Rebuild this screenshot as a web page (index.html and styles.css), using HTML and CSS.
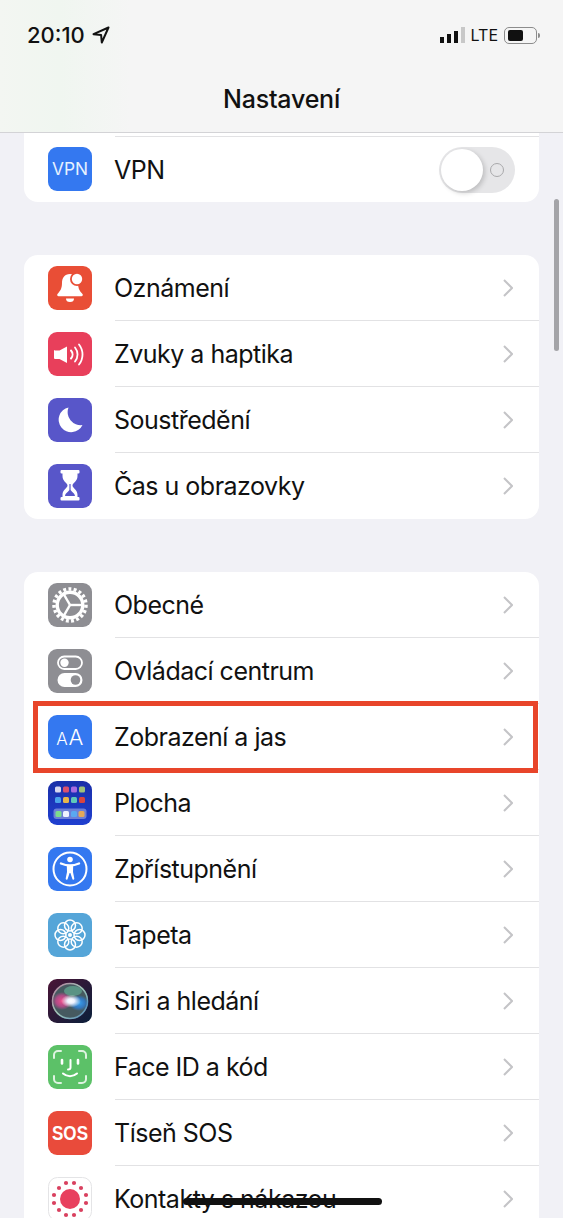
FILE: index.html
```html
<!DOCTYPE html>
<html lang="cs">
<head>
  <meta charset="UTF-8">
  <title>Nastavení</title>
  <link rel="stylesheet" href="styles.css">
</head>
<body>
  <div class="screen">
    <header class="top">
      <div class="status">
        <div class="status-left">
          <span class="time">20:10</span>
          <svg class="loc" viewBox="0 0 18 18"><path d="M16.5 1.500 1.500 8.200l7.600.7.7 7.600z" fill="none" stroke="#111" stroke-width="2" stroke-linejoin="round"/></svg>
        </div>
        <div class="status-right">
          <div class="bars">
            <span class="bar bar-1"></span>
            <span class="bar bar-2"></span>
            <span class="bar bar-3"></span>
            <span class="bar bar-4"></span>
          </div>
          <span class="lte">LTE</span>
          <div class="battery"><span class="battery-fill"></span></div>
          <span class="battery-nub"></span>
        </div>
      </div>
      <h1 class="title">Nastavení</h1>
    </header>

    <main class="list">
      <section class="card card-cut">
        <div class="row">
          <svg class="icon" viewBox="0 0 44 44"><rect width="44" height="44" rx="9" fill="#3478f0"/><text class="icon-text" x="22" y="28" font-size="17.500" fill="#e6f0ff" text-anchor="middle" textLength="36" lengthAdjust="spacingAndGlyphs">VPN</text></svg>
          <div class="row-body row-body-top row-body-last">
            <span class="label">VPN</span>
            <div class="toggle"><span class="knob"></span><span class="toggle-o"></span></div>
          </div>
        </div>
      </section>

      <section class="card">
        <div class="row">
          <svg class="icon" viewBox="0 0 44 44"><rect width="44" height="44" rx="9" fill="#e94e36"/><path d="M22 8c-5.500 0-8 4-8 9 0 6-2 8-4.500 11-.8 1 0 2.200 1 2.200h23c1 0 1.800-1.200 1-2.200C31 25 30 21 30 17c0-5-2.500-9-8-9z" fill="#fff"/><path d="M18 32.500h8a4 3.500 0 0 1-8 0z" fill="#fff"/><circle cx="29" cy="13" r="7" fill="#e94e36"/><circle cx="29" cy="13" r="5.200" fill="#fff"/></svg>
          <div class="row-body"><span class="label">Oznámení</span><svg class="chev" viewBox="0 0 10 18"><path d="M1 1l8 8-8 8"/></svg></div>
        </div>
        <div class="row">
          <svg class="icon" viewBox="0 0 44 44"><rect width="44" height="44" rx="9" fill="#e83f5b"/><path d="M7 18.500h4.500L19 14.500v16.500l-7.500-4H7a1 1 0 0 1-1-1v-7a1 1 0 0 1 1-1z" fill="#fff"/><g fill="none" stroke="#fff" stroke-linecap="round"><path d="M23 18.500a6 6 0 0 1 0 8" stroke-width="2"/><path d="M27 15.500a11 11 0 0 1 0 14" stroke-width="1.800"/><path d="M31 12.500a16 16 0 0 1 0 20" stroke-width="1.800"/></g></svg>
          <div class="row-body"><span class="label">Zvuky a haptika</span><svg class="chev" viewBox="0 0 10 18"><path d="M1 1l8 8-8 8"/></svg></div>
        </div>
        <div class="row">
          <svg class="icon" viewBox="0 0 44 44"><rect width="44" height="44" rx="9" fill="#5856c9"/><path d="M20.500 9.500A12.500 12.500 0 1 0 34.500 27 13 13 0 0 1 20.500 9.500z" fill="#fff"/></svg>
          <div class="row-body"><span class="label">Soustředění</span><svg class="chev" viewBox="0 0 10 18"><path d="M1 1l8 8-8 8"/></svg></div>
        </div>
        <div class="row">
          <svg class="icon" viewBox="0 0 44 44"><rect width="44" height="44" rx="9" fill="#5856c9"/><rect x="12.500" y="6" width="19" height="3.500" rx="1" fill="#fff"/><rect x="12.500" y="33" width="19" height="3.500" rx="1" fill="#fff"/><path d="M14.500 9h15v3c0 5.500-5 7-5 9.500s5 4 5 9.500v2.500h-15V31c0-5.500 5-7 5-9.500s-5-4-5-9.500z" fill="#fff"/><path d="M21.400 20h1.200v5.500c0 2 4 3 4.400 6.500H17c.4-3.500 4.400-4.500 4.400-6.500z" fill="#5856c9"/></svg>
          <div class="row-body row-body-last"><span class="label">Čas u obrazovky</span><svg class="chev" viewBox="0 0 10 18"><path d="M1 1l8 8-8 8"/></svg></div>
        </div>
      </section>

      <section class="card">
        <div class="row">
          <svg class="icon" viewBox="0 0 44 44"><rect width="44" height="44" rx="9" fill="#8e8e93"/><circle cx="22" cy="22" r="16" fill="none" stroke="#fff" stroke-width="3.500" stroke-dasharray="2.900 2.340"/><circle cx="22" cy="22" r="12.800" fill="none" stroke="#fff" stroke-width="3.400"/><g stroke="#fff" stroke-width="2.400"><path d="M22 22H34"/><path d="M22 22l-6 -10.400"/><path d="M22 22l-6 10.400"/></g></svg>
          <div class="row-body"><span class="label">Obecné</span><svg class="chev" viewBox="0 0 10 18"><path d="M1 1l8 8-8 8"/></svg></div>
        </div>
        <div class="row">
          <svg class="icon" viewBox="0 0 44 44"><rect width="44" height="44" rx="9" fill="#8e8e93"/><rect x="10" y="7.500" width="24" height="12.500" rx="6.250" fill="none" stroke="#fff" stroke-width="1.800"/><circle cx="16.500" cy="13.750" r="4.200" fill="#fff"/><rect x="9.500" y="24" width="25" height="14" rx="7" fill="#fff"/><circle cx="27.500" cy="31" r="4.800" fill="#8e8e93"/></svg>
          <div class="row-body"><span class="label">Ovládací centrum</span><svg class="chev" viewBox="0 0 10 18"><path d="M1 1l8 8-8 8"/></svg></div>
        </div>
        <div class="row row-marked">
          <svg class="icon" viewBox="0 0 44 44"><rect width="44" height="44" rx="9" fill="#3478f0"/><text class="icon-thin" x="14" y="30" font-size="17" fill="#fff" text-anchor="middle">A</text><text class="icon-thin" x="28" y="30" font-size="22" fill="#fff" text-anchor="middle">A</text></svg>
          <div class="row-body"><span class="label">Zobrazení a jas</span><svg class="chev" viewBox="0 0 10 18"><path d="M1 1l8 8-8 8"/></svg></div>
          <div class="mark"></div>
        </div>
        <div class="row">
          <svg class="icon" viewBox="0 0 44 44"><defs><linearGradient id="homeBg" x1="0" y1="0" x2="0" y2="1"><stop offset="0" stop-color="#1a2fa8"/><stop offset="1" stop-color="#1f3fd0"/></linearGradient></defs><rect width="44" height="44" rx="9" fill="url(#homeBg)"/><rect x="7" y="5.500" width="6" height="6" rx="1.500" fill="#d8d8ee"/><rect x="15" y="5.500" width="6" height="6" rx="1.500" fill="#d9526f"/><rect x="23" y="5.500" width="6" height="6" rx="1.500" fill="#a86be0"/><rect x="31" y="5.500" width="6" height="6" rx="1.500" fill="#9fc27a"/><rect x="7" y="16" width="6" height="6" rx="1.500" fill="#4aa3ea"/><rect x="15" y="16" width="6" height="6" rx="1.500" fill="#e8b64c"/><rect x="23" y="16" width="6" height="6" rx="1.500" fill="#5fc9b8"/><rect x="31" y="16" width="6" height="6" rx="1.500" fill="#d9453f"/><rect x="5.500" y="27.500" width="33" height="10.500" rx="3" fill="#6c7fd6"/><rect x="7.500" y="30" width="6" height="6" rx="1.500" fill="#7ddc8c"/><rect x="15" y="30" width="6" height="6" rx="1.500" fill="#eef2ff"/><rect x="23" y="30" width="6" height="6" rx="1.500" fill="#5aa8f0"/><rect x="30.500" y="30" width="6" height="6" rx="1.500" fill="#e3a95a"/></svg>
          <div class="row-body"><span class="label">Plocha</span><svg class="chev" viewBox="0 0 10 18"><path d="M1 1l8 8-8 8"/></svg></div>
        </div>
        <div class="row">
          <svg class="icon" viewBox="0 0 44 44"><rect width="44" height="44" rx="9" fill="#3478f0"/><circle cx="22" cy="22" r="16.500" fill="none" stroke="#fff" stroke-width="2"/><circle cx="22" cy="12.500" r="2.800" fill="#fff"/><path d="M13 16.500c3 1.300 6 2 9 2s6-.7 9-2" fill="none" stroke="#fff" stroke-width="2.400" stroke-linecap="round"/><path d="M18.800 18h6.400l-.2 7 1.300 6.500a1 1 0 0 1-2 .3L22.400 26h-.8l-1.900 5.800a1 1 0 0 1-2-.3L19 25z" fill="#fff"/></svg>
          <div class="row-body"><span class="label">Zpřístupnění</span><svg class="chev" viewBox="0 0 10 18"><path d="M1 1l8 8-8 8"/></svg></div>
        </div>
        <div class="row">
          <svg class="icon" viewBox="0 0 44 44"><rect width="44" height="44" rx="9" fill="#55a5d8"/><g fill="none" stroke="#fff" stroke-width="1.500"><circle cx="22" cy="12.500" r="5.500"/><circle cx="22" cy="31.500" r="5.500"/><circle cx="12.500" cy="22" r="5.500"/><circle cx="31.500" cy="22" r="5.500"/><circle cx="15.300" cy="15.300" r="5.500"/><circle cx="28.700" cy="15.300" r="5.500"/><circle cx="15.300" cy="28.700" r="5.500"/><circle cx="28.700" cy="28.700" r="5.500"/></g><circle cx="22" cy="22" r="2" fill="#fff"/></svg>
          <div class="row-body"><span class="label">Tapeta</span><svg class="chev" viewBox="0 0 10 18"><path d="M1 1l8 8-8 8"/></svg></div>
        </div>
        <div class="row">
          <svg class="icon" viewBox="0 0 44 44">
            <defs>
              <linearGradient id="siriBg" x1="0" y1="0" x2="1" y2="1"><stop offset="0" stop-color="#4a1436"/><stop offset="1" stop-color="#0a1f3a"/></linearGradient>
              <linearGradient id="siriRing" x1="0" y1="0" x2="1" y2="1"><stop offset="0" stop-color="#b77a9a"/><stop offset="0.5" stop-color="#9fc5b8"/><stop offset="1" stop-color="#4f86b8"/></linearGradient>
              <radialGradient id="siriGlow"><stop offset="0" stop-color="#fff"/><stop offset="0.35" stop-color="#eef2ff"/><stop offset="1" stop-color="#fff" stop-opacity="0"/></radialGradient>
              <radialGradient id="siriPink"><stop offset="0" stop-color="#ef4f8d"/><stop offset="0.6" stop-color="#c9478f" stop-opacity="0.8"/><stop offset="1" stop-color="#c9478f" stop-opacity="0"/></radialGradient>
              <radialGradient id="siriBlue"><stop offset="0" stop-color="#3aa3f2"/><stop offset="0.6" stop-color="#2f7fd6" stop-opacity="0.8"/><stop offset="1" stop-color="#2f7fd6" stop-opacity="0"/></radialGradient>
            </defs>
            <rect width="44" height="44" rx="9" fill="url(#siriBg)"/>
            <circle cx="22" cy="22" r="18" fill="#465a60"/>
            <circle cx="22" cy="22" r="17.500" fill="none" stroke="url(#siriRing)" stroke-width="1.500"/>
            <ellipse cx="14" cy="22" rx="10" ry="9" fill="url(#siriPink)"/>
            <ellipse cx="31" cy="24" rx="10" ry="8" fill="url(#siriBlue)"/>
            <ellipse cx="25" cy="12" rx="9" ry="5" fill="#6cc2a2" opacity="0.55"/>
            <ellipse cx="23" cy="22" rx="10" ry="6.500" fill="url(#siriGlow)"/>
          </svg>
          <div class="row-body"><span class="label">Siri a hledání</span><svg class="chev" viewBox="0 0 10 18"><path d="M1 1l8 8-8 8"/></svg></div>
        </div>
        <div class="row">
          <svg class="icon" viewBox="0 0 44 44"><rect width="44" height="44" rx="9" fill="#5cc168"/><g fill="none" stroke="#fff" stroke-width="2" stroke-linecap="round"><path d="M6 13V10a4 4 0 0 1 4-4h3M31 6h3a4 4 0 0 1 4 4v3M38 31v3a4 4 0 0 1-4 4h-3M13 38h-3a4 4 0 0 1-4-4v-3" opacity="0.8"/><path d="M14 15v3.500M30 15v3.500" stroke-width="2.600"/><path d="M22.500 15v7.500c0 1.500-1 2-2.500 2"/><path d="M15 28.500c4 3.500 10 3.500 14 0"/></g></svg>
          <div class="row-body"><span class="label">Face ID a kód</span><svg class="chev" viewBox="0 0 10 18"><path d="M1 1l8 8-8 8"/></svg></div>
        </div>
        <div class="row">
          <svg class="icon" viewBox="0 0 44 44"><rect width="44" height="44" rx="9" fill="#e94b3b"/><text class="icon-sos" x="22" y="29" font-size="20.500" fill="#fff" text-anchor="middle" textLength="36" lengthAdjust="spacingAndGlyphs">SOS</text></svg>
          <div class="row-body"><span class="label">Tíseň SOS</span><svg class="chev" viewBox="0 0 10 18"><path d="M1 1l8 8-8 8"/></svg></div>
        </div>
        <div class="row">
          <svg class="icon" viewBox="0 0 44 44"><rect x="0.500" y="0.500" width="43" height="43" rx="9" fill="#fff" stroke="#e4e4e6"/><circle cx="22" cy="22" r="10" fill="#e8405e"/><g fill="#d9405f"><circle cx="18" cy="6" r="2.100"/><circle cx="26" cy="6" r="2.100"/><circle cx="33" cy="11" r="2.100"/><circle cx="38" cy="18" r="2.100"/><circle cx="38" cy="26" r="2.100"/><circle cx="33" cy="33" r="2.100"/><circle cx="26" cy="38" r="2.100"/><circle cx="18" cy="38" r="2.100"/><circle cx="11" cy="33" r="2.100"/><circle cx="6" cy="26" r="2.100"/><circle cx="6" cy="18" r="2.100"/><circle cx="11" cy="11" r="2.100"/></g></svg>
          <div class="row-body row-body-last"><span class="label">Kontakty s nákazou</span><svg class="chev" viewBox="0 0 10 18"><path d="M1 1l8 8-8 8"/></svg></div>
        </div>
      </section>
    </main>

    <div class="scrollbar"></div>
    <div class="home"></div>
  </div>
</body>
</html>
```

FILE: styles.css
```css
html, body {
  margin: 0;
  padding: 0;
}

body {
  font-family: Inter, "Liberation Sans", sans-serif;
  color: #111;
}

.screen {
  position: relative;
  width: 563px;
  height: 1218px;
  overflow: hidden;
  background-color: #f1f1f6;
}

/* horni lista */
.top {
  height: 132px;
  background: linear-gradient(90deg, #f3f6f2 0, #f0f6f0 60px, #f5f5f5 130px);
  border-bottom: 1px solid #d3d3d6;
}

.status {
  display: flex;
  justify-content: space-between;
  align-items: center;
  height: 26px;
  padding: 22px 23px 0 27px;
}

.status-left {
  display: flex;
  align-items: center;
  gap: 7px;
}

.time {
  font-size: 22px;
  font-weight: 500;
}

.loc {
  width: 18px;
  height: 18px;
}

.status-right {
  display: flex;
  align-items: center;
}

.bars {
  display: flex;
  align-items: flex-end;
  gap: 3px;
  height: 16px;
}

.bar {
  width: 4px;
  background: #111;
}

.bar-1 { height: 6px; }
.bar-2 { height: 9px; }
.bar-3 { height: 12px; }
.bar-4 { height: 16px; background: #c8c8c8; }

.lte {
  margin-left: 6px;
  font-size: 16px;
  line-height: 20px;
}

.battery {
  box-sizing: border-box;
  width: 33px;
  height: 17px;
  margin-left: 6px;
  padding: 2px 3px;
  border: 1px solid #8c8c8c;
  border-radius: 5px;
}

.battery-fill {
  display: block;
  width: 15px;
  height: 11px;
  background: #111;
  border-radius: 2px;
}

.battery-nub {
  width: 2px;
  height: 5px;
  margin-left: 1px;
  background: #8c8c8c;
  border-radius: 0 2px 2px 0;
}

.title {
  margin: 36px 0 0;
  font-size: 25px;
  font-weight: 500;
  letter-spacing: -0.2px;
  line-height: 30px;
  text-align: center;
}

/* seznam */
.list {
  display: flex;
  flex-direction: column;
  gap: 53px;
  padding: 0 24px;
}

.card {
  background: #fff;
  border-radius: 14px;
}

.card-cut {
  padding-top: 3px;
  border-radius: 0 0 14px 14px;
}

.row {
  position: relative;
  display: flex;
  align-items: center;
  height: 66px;
  padding-left: 24px;
}

.icon {
  flex: none;
  width: 44px;
  height: 44px;
}

.icon-text {
  font-family: Inter, sans-serif;
}

.icon-thin {
  font-family: Inter, sans-serif;
  font-weight: 300;
}

.icon-sos {
  font-family: "Liberation Sans", sans-serif;
  font-weight: bold;
}

.row-body {
  box-sizing: border-box;
  flex: 1;
  display: flex;
  justify-content: space-between;
  align-items: center;
  height: 100%;
  margin-left: 23px;
  padding-right: 26px;
  border-bottom: 1px solid #e2e2e4;
}

.row-body-top {
  border-top: 1px solid #e2e2e4;
  padding-right: 24px;
}

.row-body-last {
  border-bottom: none;
}

.label {
  margin-left: -1px;
  font-size: 25px;
  letter-spacing: -0.5px;
}

.chev {
  width: 10px;
  height: 18px;
  fill: none;
  stroke: #c4c4c7;
  stroke-width: 2;
}

.toggle {
  position: relative;
  display: flex;
  align-items: center;
  justify-content: flex-end;
  box-sizing: border-box;
  width: 76px;
  height: 46px;
  padding: 0 11px;
  background: #e6e6e8;
  border-radius: 23px;
}

.knob {
  position: absolute;
  left: 2px;
  top: 2px;
  width: 42px;
  height: 42px;
  background: #fff;
  border-radius: 50%;
  box-shadow: 2px 2px 5px rgba(0,0,0,0.18);
}

.toggle-o {
  box-sizing: border-box;
  width: 14px;
  height: 14px;
  border: 1.5px solid #a9a9ab;
  border-radius: 50%;
}

/* cerveny ramecek pres radek */
.mark {
  position: absolute;
  top: -3px;
  bottom: -3px;
  left: 9px;
  right: 1px;
  border: 5px solid #e8452a;
}

.scrollbar {
  position: absolute;
  left: 554px;
  top: 199px;
  width: 5px;
  height: 152px;
  background: #a4a4a8;
  border-radius: 3px;
}

.home {
  position: absolute;
  left: 183px;
  top: 1198px;
  width: 199px;
  height: 7px;
  background: #111;
  border-radius: 4px;
}
```
